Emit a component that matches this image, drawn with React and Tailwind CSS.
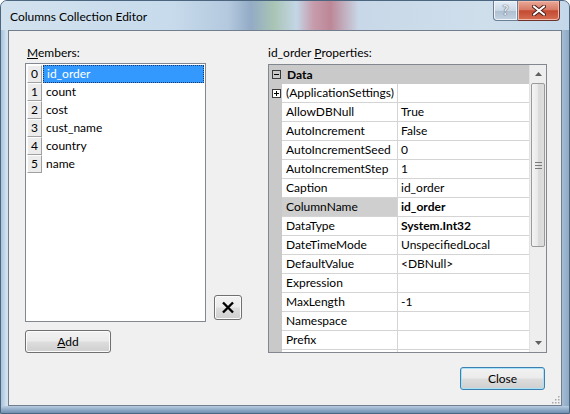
import React from 'react'

const members = ['id_order', 'count', 'cost', 'cust_name', 'country', 'name']

const props = [
  { name: '(ApplicationSettings)', value: '', expand: true },
  { name: 'AllowDBNull', value: 'True' },
  { name: 'AutoIncrement', value: 'False' },
  { name: 'AutoIncrementSeed', value: '0' },
  { name: 'AutoIncrementStep', value: '1' },
  { name: 'Caption', value: 'id_order' },
  { name: 'ColumnName', value: 'id_order', bold: true, selected: true },
  { name: 'DataType', value: 'System.Int32', bold: true },
  { name: 'DateTimeMode', value: 'UnspecifiedLocal' },
  { name: 'DefaultValue', value: '<DBNull>' },
  { name: 'Expression', value: '' },
  { name: 'MaxLength', value: '-1' },
  { name: 'Namespace', value: '' },
  { name: 'Prefix', value: '' },
  { name: '', value: '' },
]

const btn =
  'flex items-center justify-center rounded-[3px] border text-[12px] text-black bg-[linear-gradient(#f2f2f2_0%,#ebebeb_48%,#dddddd_52%,#cfcfcf_100%)]'

function TitleButtons() {
  return (
    <div className="flex items-start mr-[9px]">
      <div className="w-[25px] h-[20px] rounded-bl-[4px] border border-t-0 border-[#6b7e93] bg-[linear-gradient(#e6eef6_0%,#c9d7e5_50%,#aebfd1_52%,#c4d3e1_100%)] flex items-center justify-center shadow-[inset_0_0_0_1px_#eef4fa]">
        <span className="text-[13px] leading-none font-bold text-[#eef2f6] [text-shadow:0_0_1px_#4a5566,0_0_1px_#4a5566]">?</span>
      </div>
      <div className="w-[42px] h-[20px] rounded-br-[4px] border border-t-0 border-l-0 border-[#6d3128] bg-[linear-gradient(#e9a99a_0%,#d77c66_45%,#c44a33_52%,#d56e52_100%)] flex items-center justify-center shadow-[inset_0_0_0_1px_#f0b9ab]">
        <svg width="14" height="11" viewBox="0 0 14 11">
          <path d="M2 1.5 L12 9.5 M12 1.5 L2 9.5" stroke="#4a1d17" strokeWidth="4" strokeLinecap="round" />
          <path d="M2 1.5 L12 9.5 M12 1.5 L2 9.5" stroke="#ffffff" strokeWidth="2.2" strokeLinecap="round" />
        </svg>
      </div>
    </div>
  )
}

function MemberList() {
  return (
    <div className="w-[181px] h-[259px] mt-[2px] border border-[#828790] bg-white pt-[1px] px-[1px]">
      {members.map((m, i) => (
        <div key={m} className="flex h-[18px]">
          <div className="w-[15px] h-[18px] border border-[#a0a0a0] border-t-[#fdfdfd] border-l-[#fdfdfd] bg-[#ececec] flex items-center justify-center text-[12px] leading-none">
            {i}
          </div>
          <div
            className={
              'flex-1 flex items-center pl-[3px] ml-[1px] text-[12px] ' +
              (i === 0 ? 'bg-[#3399ff] text-white border border-dotted border-[#1a3a66]' : 'text-black')
            }
          >
            {m}
          </div>
        </div>
      ))}
    </div>
  )
}

function Box({ plus }) {
  return (
    <div className={'w-[9px] h-[9px] border border-[#3a3a3a] flex items-center justify-center ' + (plus ? 'bg-white' : 'bg-transparent')}>
      <svg width="7" height="7" viewBox="0 0 7 7">
        <path d="M1 3.5 H6" stroke="#000" strokeWidth="1" />
        {plus && <path d="M3.5 1 V6" stroke="#000" strokeWidth="1" />}
      </svg>
    </div>
  )
}

function Scrollbar() {
  return (
    <div className="w-[17px] h-full flex flex-col bg-[#eeeeee] border-l border-[#e2e2e2]">
      <div className="h-[18px] flex items-center justify-center">
        <svg width="7" height="4" viewBox="0 0 7 4"><path d="M0 4 L3.5 0 L7 4 Z" fill="#606060" /></svg>
      </div>
      <div className="mx-[1px] h-[164px] rounded-[2px] border border-[#9a9a9a] bg-[linear-gradient(90deg,#f4f4f4_0%,#e8e8e8_50%,#d9d9d9_55%,#dedede_100%)] flex items-center justify-center">
        <svg width="7" height="7" viewBox="0 0 7 7">
          <path d="M0 0.5 H7 M0 3.5 H7 M0 6.5 H7" stroke="#7a7a7a" strokeWidth="1" />
        </svg>
      </div>
      <div className="flex-1" />
      <div className="h-[18px] flex items-center justify-center">
        <svg width="7" height="4" viewBox="0 0 7 4"><path d="M0 0 L3.5 4 L7 0 Z" fill="#606060" /></svg>
      </div>
    </div>
  )
}

function PropertyGrid() {
  return (
    <div className="w-[279px] h-[289px] mt-[3px] border border-[#828790] bg-white flex overflow-hidden">
      <div className="flex-1 flex flex-col">
        <div className="h-[19px] shrink-0 flex items-center bg-[#c9c9c9]">
          <div className="w-[13px] flex justify-center pl-[1px]"><Box /></div>
          <span className="pl-[5px] text-[12px] font-bold">Data</span>
        </div>
        {props.map((p, i) => (
          <div key={i} className="h-[19px] shrink-0 flex">
            <div className="w-[13px] bg-[#c9c9c9] flex items-center justify-center pl-[1px]">
              {p.expand && <Box plus />}
            </div>
            <div className="flex-1 flex border-b border-[#d4d4d4]">
              <div className={'w-[116px] border-r border-[#d4d4d4] pl-[4px] flex items-center text-[12px] whitespace-nowrap overflow-hidden ' + (p.selected ? 'bg-[#cfcfcf]' : '')}>
                {p.name}
              </div>
              <div className={'flex-1 pl-[3px] flex items-center text-[12px] whitespace-nowrap ' + (p.bold ? 'font-bold' : '')}>
                {p.value}
              </div>
            </div>
          </div>
        ))}
      </div>
      <Scrollbar />
    </div>
  )
}

export default function App() {
  return (
    <div className="w-[570px] h-[414px] flex flex-col rounded-t-[7px] border border-[#4d6680] overflow-hidden bg-[linear-gradient(90deg,#a9c2db_0%,#d3e2ef_1%,#bcd1e6_3%,#c9dbeb_50%,#c5d8ea_97%,#8ea9c4_100%)] font-['Segoe_UI','Lato',sans-serif] text-black">
      <div className="h-[29px] shrink-0 flex items-start bg-[linear-gradient(90deg,#d2e1ee_0%,#c7dbec_30%,#b4c9de_40%,#93abc6_44%,#a9c4b4_48%,#c3d6e6_52%,#c79cac_55%,#bc8797_58%,#c8d8e8_63%,#cfdeeb_85%,#c4d8ea_100%)]">
        <div className="pl-[9px] pt-[8px] text-[12px] leading-[16px] flex-1">Columns Collection Editor</div>
        <TitleButtons />
      </div>
      <div className="flex-1 flex px-[7px]">
        <div className="flex-1 relative flex flex-col border border-[#707e8e] bg-[#f0f0f0]">
          <div className="flex pl-[16px] pt-[14px]">
            <div className="flex flex-col">
              <div className="h-[16px] text-[12px] leading-[16px] pl-[2px]">
                <span className="underline">M</span>embers:
              </div>
              <MemberList />
              <div className={btn + ' mt-[8px] w-[86px] h-[23px] border-[#707070] shadow-[inset_0_0_0_1px_#fbfbfb]'}>
                <span><span className="underline">A</span>dd</span>
              </div>
            </div>
            <div className="ml-[8px] mt-[250px]">
              <div className={btn + ' w-[28px] h-[25px] border-[#707070] shadow-[inset_0_0_0_1px_#fbfbfb]'}>
                <svg width="14" height="13" viewBox="0 0 14 13">
                  <path d="M2 1.5 L12 11.5 M12 1.5 L2 11.5" stroke="#000" strokeWidth="2.4" />
                </svg>
              </div>
            </div>
            <div className="ml-[26px] flex flex-col">
              <div className="h-[16px] text-[12px] leading-[16px]">
                id_order <span className="underline">P</span>roperties:
              </div>
              <PropertyGrid />
            </div>
          </div>
          <div className="flex justify-end pr-[16px] mt-[14px]">
            <div className={btn + ' w-[85px] h-[23px] border-[#3c7fb1] shadow-[inset_0_0_0_1px_#a8e2f8]'}>Close</div>
          </div>
          <svg className="absolute right-[1px] bottom-[1px]" width="10" height="10" viewBox="0 0 10 10">
            {[[8, 2], [8, 5], [5, 5], [8, 8], [5, 8], [2, 8]].map(([x, y], i) => (
              <rect key={i} x={x} y={y} width="1.5" height="1.5" fill="#a8a8a8" />
            ))}
          </svg>
        </div>
      </div>
      <div className="h-[7px] shrink-0 bg-[linear-gradient(#b9cde1_0%,#8aa6c4_60%,#6f8fb1_100%)]" />
    </div>
  )
}
